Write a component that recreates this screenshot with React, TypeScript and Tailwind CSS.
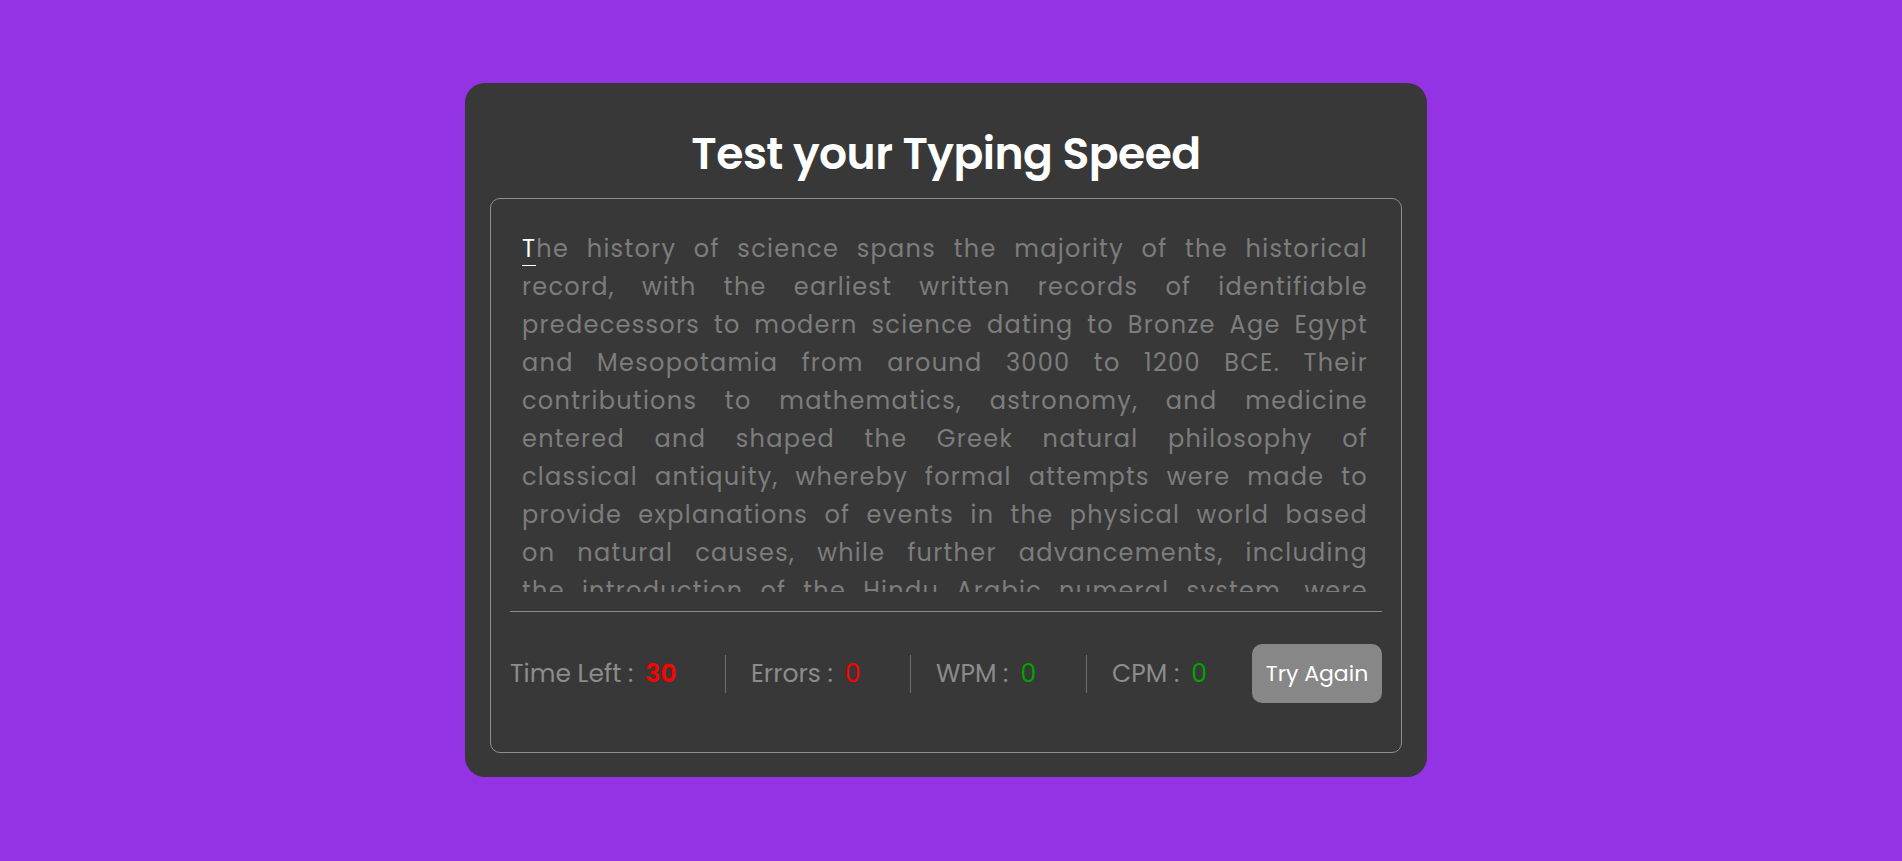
import React from 'react';

const LINES = [
  'The history of science spans the majority of the historical',
  'record, with the earliest written records of identifiable',
  'predecessors to modern science dating to Bronze Age Egypt',
  'and Mesopotamia from around 3000 to 1200 BCE. Their',
  'contributions to mathematics, astronomy, and medicine',
  'entered and shaped the Greek natural philosophy of',
  'classical antiquity, whereby formal attempts were made to',
  'provide explanations of events in the physical world based',
  'on natural causes, while further advancements, including',
  'the introduction of the Hindu Arabic numeral system, were',
];

const STATS = [
  { label: 'Time Left :', value: '30', color: 'text-[#ff0000] font-semibold', width: 'w-[216px]' },
  { label: 'Errors :', value: '0', color: 'text-[#ff0000]', width: 'w-[185px] pl-[25px]' },
  { label: 'WPM :', value: '0', color: 'text-[#00a300]', width: 'w-[176px] pl-[25px]' },
];

const App: React.FC = () => {
  return (
    <div className="min-h-screen w-full bg-[#9333e3] flex justify-center pt-[83px] pr-[10px] font-[Poppins,Inter,sans-serif]">
      <div className="w-[962px] h-[694px] rounded-[20px] bg-[#383838] px-[25px] pt-[41px] pb-[25px]">
        {/* Title */}
        <h1 className="text-center text-[44px] leading-[60px] font-semibold text-white mb-[14px] tracking-[-0.5px]">
          Test your Typing Speed
        </h1>

        <div className="rounded-[10px] border border-[#8f8f8f] px-[19px] pt-[31px]">
          {/* Paragraph */}
          <div className="h-[362px] overflow-hidden pl-[12px] pr-[14px] text-[24px] leading-[38px] tracking-[1.3px] text-[#7d7d7d]">
            {LINES.map((line, i) => (
              <p key={i} className="text-justify [text-align-last:justify]">
                {i === 0 ? (
                  <>
                    <span className="text-white border-b border-white">T</span>
                    {line.slice(1)}
                  </>
                ) : (
                  line
                )}
              </p>
            ))}
          </div>

          {/* Stats */}
          <div className="mt-[19px] border-t border-[#8a8a8a] pt-[32px] pb-[49px] flex items-center">
            {STATS.map((s) => (
              <div
                key={s.label}
                className={`${s.width} h-[38px] flex items-center border-r border-[#6e6e6e] text-[25px] text-[#8c8c8c]`}
              >
                <span>{s.label}</span>
                <span className={`ml-[12px] ${s.color}`}>{s.value}</span>
              </div>
            ))}
            <div className="pl-[25px] h-[38px] flex items-center text-[25px] text-[#8c8c8c]">
              <span>CPM :</span>
              <span className="ml-[12px] text-[#00a300]">0</span>
            </div>
            <button className="ml-auto h-[59px] w-[130px] rounded-[10px] bg-[#878787] text-white text-[22px]">
              Try Again
            </button>
          </div>
        </div>
      </div>
    </div>
  );
};

export default App;
